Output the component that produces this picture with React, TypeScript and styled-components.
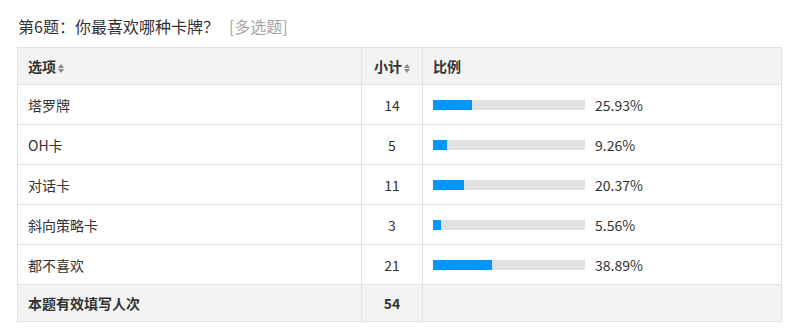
import React from 'react'
import styled, { createGlobalStyle } from 'styled-components'

const GlobalStyle = createGlobalStyle`
  body {
    margin: 0;
    background: #fff;
    font-family: "Noto Sans CJK SC", "Noto Sans", sans-serif;
    color: #333;
  }
`

const Wrapper = styled.div`
  padding: 14px 14px 0 17px;
`

const Title = styled.div`
  font-size: 16px;
  line-height: 24px;
  color: #333;
  margin-bottom: 9px;
  padding-left: 1px;
  .type {
    color: #a5a5a5;
    margin-left: 10px;
  }
`

const Table = styled.table`
  width: 765px;
  border-collapse: collapse;
  font-size: 14px;
  table-layout: fixed;
  td,
  th {
    border: 1px solid #e2e2e2;
    padding: 0 10px;
  }
`

const HeadRow = styled.tr`
  height: 37px;
  background: #f3f3f3;
  th {
    font-weight: bold;
    text-align: left;
  }
`

const Row = styled.tr<{ $footer?: boolean }>`
  height: ${(p) => (p.$footer ? '37px' : '40px')};
  background: ${(p) => (p.$footer ? '#f3f3f3' : '#fff')};
  font-weight: ${(p) => (p.$footer ? 'bold' : 'normal')};
`

const CountCell = styled.td`
  text-align: center;
`

const SortIcon = styled.span`
  display: inline-flex;
  flex-direction: column;
  vertical-align: middle;
  margin-left: 2px;
  gap: 1px;
  &::before,
  &::after {
    content: '';
    border-left: 3px solid transparent;
    border-right: 3px solid transparent;
  }
  &::before {
    border-bottom: 4px solid #888;
  }
  &::after {
    border-top: 4px solid #888;
  }
`

const RatioWrap = styled.div`
  display: flex;
  align-items: center;
`

const Bar = styled.div`
  width: 152px;
  height: 10px;
  background: #e0e0e0;
  margin-right: 10px;
`

const Fill = styled.div`
  height: 100%;
  background: #0095ff;
`

const rows = [
  { name: '塔罗牌', count: 14, pct: '25.93%' },
  { name: 'OH卡', count: 5, pct: '9.26%' },
  { name: '对话卡', count: 11, pct: '20.37%' },
  { name: '斜向策略卡', count: 3, pct: '5.56%' },
  { name: '都不喜欢', count: 21, pct: '38.89%' },
]

export default function App() {
  const total = 54
  return (
    <Wrapper>
      <GlobalStyle />
      <Title>
        第6题：你最喜欢哪种卡牌？<span className="type">[多选题]</span>
      </Title>
      <Table>
        <colgroup>
          <col style={{ width: 344 }} />
          <col style={{ width: 61 }} />
          <col />
        </colgroup>
        <thead>
          <HeadRow>
            <th>
              选项
              <SortIcon />
            </th>
            <th style={{ textAlign: 'center' }}>
              小计
              <SortIcon />
            </th>
            <th>比例</th>
          </HeadRow>
        </thead>
        <tbody>
          {rows.map((r) => (
            <Row key={r.name}>
              <td>{r.name}</td>
              <CountCell>{r.count}</CountCell>
              <td>
                <RatioWrap>
                  <Bar>
                    <Fill style={{ width: `${(r.count / total) * 100}%` }} />
                  </Bar>
                  {r.pct}
                </RatioWrap>
              </td>
            </Row>
          ))}
          <Row $footer>
            <td>本题有效填写人次</td>
            <CountCell>{total}</CountCell>
            <td />
          </Row>
        </tbody>
      </Table>
    </Wrapper>
  )
}
